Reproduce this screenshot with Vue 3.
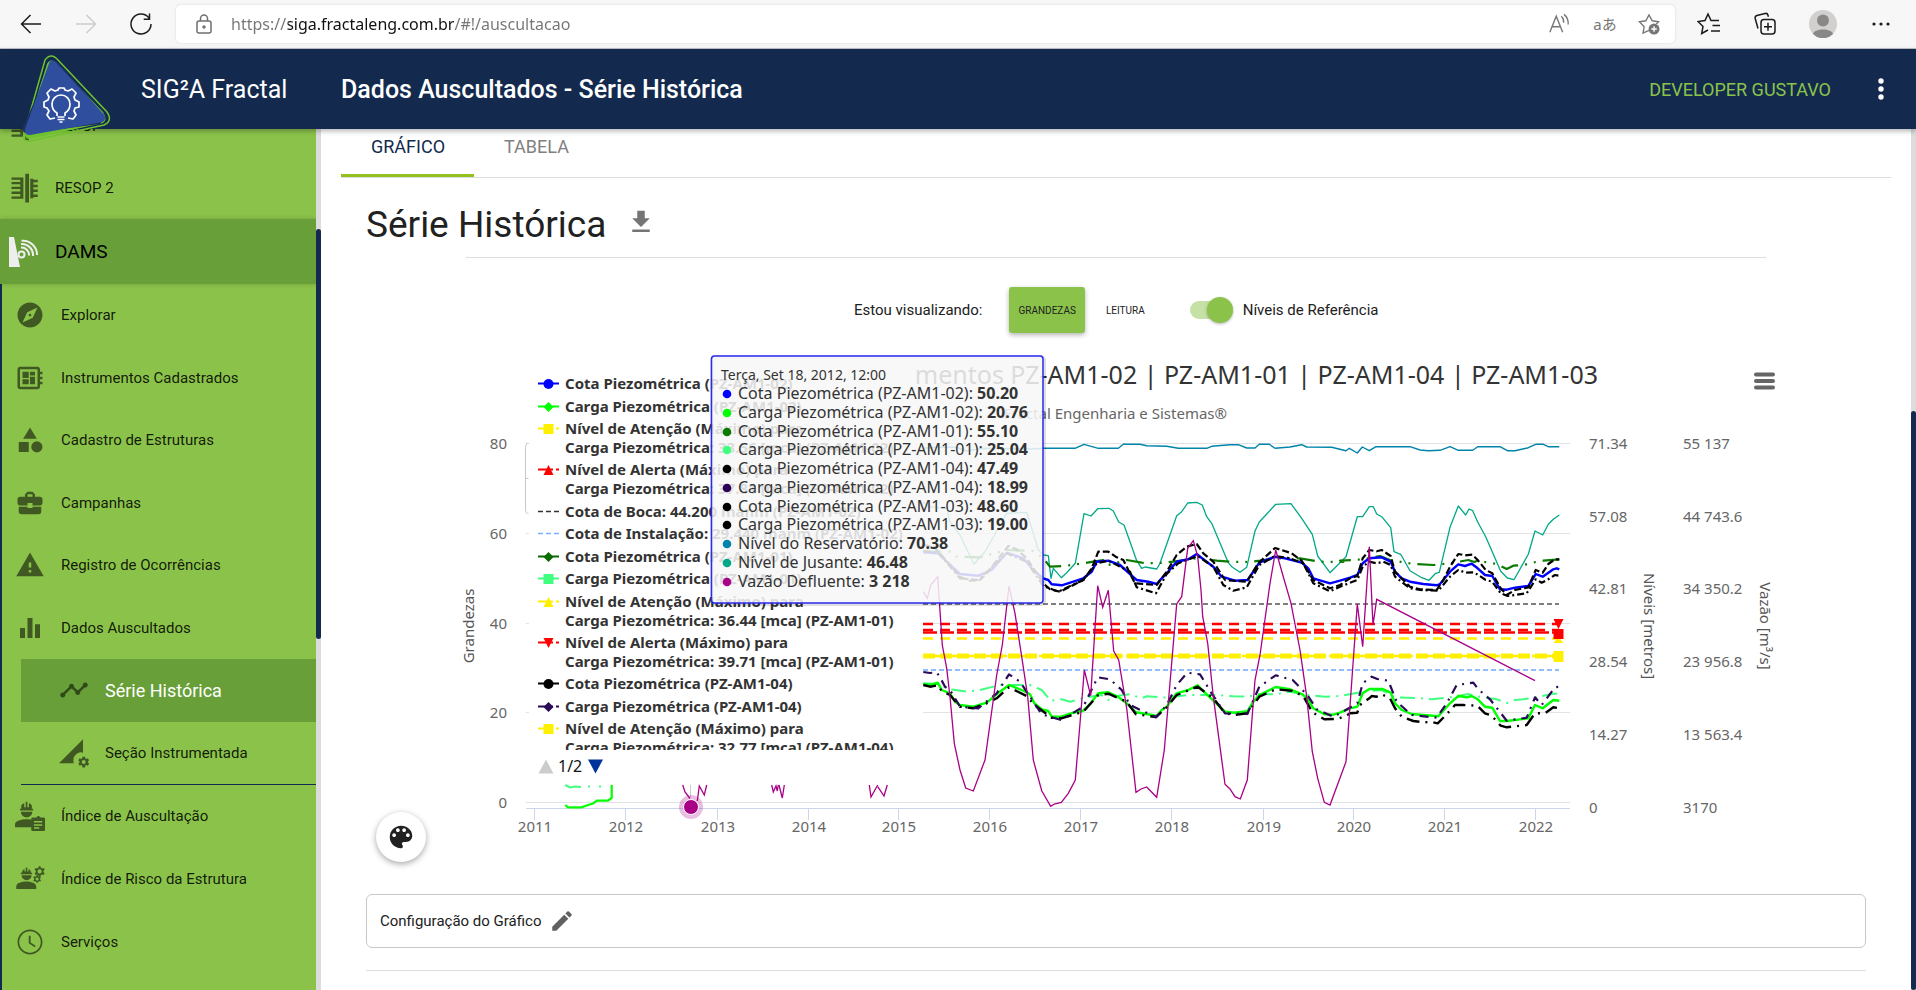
<script setup>
import { ref } from 'vue'

const address = ref('https://siga.fractaleng.com.br/#!/auscultacao')
const showLevels = ref(true)

const icons = {
  explore: 'M12 10.9c-.61 0-1.1.49-1.1 1.1s.49 1.1 1.1 1.1c.61 0 1.1-.49 1.1-1.1s-.49-1.1-1.1-1.1zM12 2C6.48 2 2 6.48 2 12s4.48 10 10 10 10-4.48 10-10S17.52 2 12 2zm2.19 12.19L6 18l3.81-8.19L18 6l-3.81 8.19z',
  board: 'M22 9V7h-2V5c0-1.1-.9-2-2-2H4c-1.1 0-2 .9-2 2v14c0 1.1.9 2 2 2h14c1.1 0 2-.9 2-2v-2h2v-2h-2v-2h2v-2h-2V9h2zm-4 10H4V5h14v14zM6 13h5v4H6zm6-6h4v3h-4zM6 7h5v5H6zm6 4h4v6h-4z',
  category: 'M12 2l-5.5 9h11zM17.5 13a4.5 4.5 0 1 0 0 9 4.5 4.5 0 0 0 0-9zM3 13.5h8v8H3z',
  briefcase: 'M10 16v-1H3.01L3 19c0 1.11.89 2 2 2h14c1.11 0 2-.89 2-2v-4h-7v1h-4zm10-9h-4.01V5l-2-2h-4l-2 2v2H4c-1.1 0-2 .9-2 2v3c0 1.11.89 2 2 2h6v-2h4v2h6c1.1 0 2-.9 2-2V9c0-1.1-.9-2-2-2zm-6 0h-4V5h4v2z',
  warning: 'M1 21h22L12 2 1 21zm12-3h-2v-2h2v2zm0-4h-2v-4h2v4z',
  bars: 'M10 20h4V4h-4v16zm-6 0h4v-8H4v8zM16 9v11h4V9h-4z',
  timeline: 'M23 8c0 1.1-.9 2-2 2-.18 0-.35-.02-.51-.07l-3.56 3.55c.05.16.07.34.07.52 0 1.1-.9 2-2 2s-2-.9-2-2c0-.18.02-.36.07-.52l-2.55-2.55c-.16.05-.34.07-.52.07s-.36-.02-.52-.07l-4.55 4.56c.05.16.07.33.07.51 0 1.1-.9 2-2 2s-2-.9-2-2 .9-2 2-2c.18 0 .35.02.51.07l4.56-4.55C8.02 9.36 8 9.18 8 9c0-1.1.9-2 2-2s2 .9 2 2c0 .18-.02.36-.07.52l2.55 2.55c.16-.05.34-.07.52-.07s.36.02.52.07l3.55-3.56C19.02 8.35 19 8.18 19 8c0-1.1.9-2 2-2s2 .9 2 2z',
  section: 'M20 1v11.2a6.4 6.4 0 0 0-8 6.2c0 .9.1 1.800.3 2.600H0z M24.100 19.500l1-.800-1-1.800-1.300.500a4 4 0 0 0-.900-.500l-.200-1.300h-2.200l-.200 1.300a4 4 0 0 0-.900.500l-1.300-.500-1 1.800 1 .800v1l-1 .800 1 1.800 1.300-.500.900.500.200 1.400h2.200l.200-1.400.900-.500 1.300.500 1-1.800-1-.800zM20.600 21.600a1.600 1.600 0 1 1 0-3.200 1.600 1.600 0 0 1 0 3.200z',
  workerClip: 'M4 6.200h1V3.400A5 5 0 0 1 7.400 1.600V5h1.200V.6h1.300V5h1.200V1.600a5 5 0 0 1 2.400 2v2.600h1v1.300H4zM4.700 8.500h9.200a4.600 4.600 0 0 1-9.200 0zM0 21v-2.500C0 15.700 5 14.500 9.200 14.500c1.300 0 2.600.100 3.800.400V21zM14 13.200h3a1.800 1.800 0 0 1 3.400 0h2.600a1 1 0 0 1 1 1V23a1 1 0 0 1-1 1H14a1 1 0 0 1-1-1v-8.800a1 1 0 0 1 1-1zM15.200 16v1.200h6.600V16zm0 2.500v1.200h6.600v-1.200zm0 2.500v1.200h4.200V21z',
  workerGear: 'M4.600 7h.800A4.600 4.600 0 0 1 7.600 3.700V6h1V2.800h1.200V6h1V3.700A4.600 4.600 0 0 1 13 7h.700v1.200H4.600zM5.300 9h8a4 4 0 0 1-8 0zM1 20v-2.200C1 15.300 5.400 14 9 14s8 1.300 8 3.800V20z M19 1.700l1.400 0 .3 1.200 1.100.6 1.200-.4.700 1.300-.9.900v1.200l.9.900-.7 1.300-1.200-.4-1.100.6-.3 1.200H19l-.3-1.200-1.100-.6-1.200.4-.7-1.300.9-.9V5.300l-.9-.9.700-1.300 1.200.4 1.100-.6zM19.700 4.200a1.700 1.700 0 1 0 0 3.400 1.700 1.700 0 0 0 0-3.400z M17.200 8.800h1l.3.900.9.400.9-.3.500.9-.7.700v1l.7.700-.5.900-.9-.3-.9.400-.3.900h-1l-.3-.9-.9-.4-.9.300-.5-.9.700-.7v-1l-.7-.7.500-.9.900.3.900-.4zM17.700 10.700a1.200 1.200 0 1 0 0 2.400 1.200 1.200 0 0 0 0-2.400z',
  clock: 'M11.99 2C6.47 2 2 6.48 2 12s4.47 10 9.99 10C17.52 22 22 17.52 22 12S17.52 2 11.99 2zM12 20.600a8.600 8.600 0 1 1 0-17.200 8.600 8.600 0 0 1 0 17.200zm.5-13.600H11v6l4.800 3.200.75-1.150-4.050-2.700z',
  dam: 'M2 3.500h9.500v17H2v-1.800h7v-2H2v-1.900h7v-2H2v-1.900h7v-2H2V7.200h7V5.400H2z M13 .500h3v23h-3z M17 4.500h2.500v.9H23v2h-3.500v1.900H23v2h-3.500v1.900H23v2h-3.500v1.900H23v2h-3.500v1H17z',
}

const monitoring = [
  { label: 'Explorar', icon: 'explore' },
  { label: 'Instrumentos Cadastrados', icon: 'board' },
  { label: 'Cadastro de Estruturas', icon: 'category' },
  { label: 'Campanhas', icon: 'briefcase' },
  { label: 'Registro de Ocorrências', icon: 'warning' },
  { label: 'Dados Auscultados', icon: 'bars' },
]
const indexes = [
  { label: 'Índice de Auscultação', icon: 'workerClip' },
  { label: 'Índice de Risco da Estrutura', icon: 'workerGear' },
  { label: 'Serviços', icon: 'clock' },
]

/* Chart geometry: points are thirds of a unit from (900, 350). */
const late = 1320
function line(...parts) {
  return parts
    .flatMap(([dx, dy, text]) => text.split(' ').map((p) => {
      const [x, y] = p.split(',').map(Number)
      return `${(900 + (x + dx) / 3).toFixed(1)},${(350 + (y + dy) / 3).toFixed(1)}`
    }))
    .join(' ')
}

const series = [
  { color: '#0084ab', width: 1.4, points: line([0, 0, '70,295 110,292 170,292 200,303 250,295 395,297 430,295 525,295 552,283 595,295 655,295 670,283 720,283 740,287 800,289 835,295 920,295 935,289 990,284 1015,284 1040,294 1065,294 1078,283 1108,283 1125,295 1170,291 1205,284 1220,291 1295,292 1338,302 1348,295'], [late, 0, '52,309 67,291 88,302 108,290 210,290 240,300 265,302 300,301 330,290 355,301 398,301 413,290 480,290 502,302 525,302 565,293 587,283 610,283 625,290 658,290']) },
  { color: '#00a887', width: 1.3, points: line([0, 0, '70,455 85,470 140,475 150,515 180,555 222,643 255,605 320,490 380,487 400,550 415,600 430,615 445,617 453,685 460,655 484,683 500,668 526,640 552,491 573,498 593,476 627,475 640,483 656,516 672,525 690,575 710,632 725,655 735,651 770,657 780,640 830,497 845,485 863,459 890,457 907,465 920,500 935,520 985,638 995,650 1020,667 1040,652 1065,543 1078,516 1127,463 1173,461 1205,505 1237,553 1253,618 1290,668 1338,620'], [late, 0, '52,500 68,500 88,470 100,470 110,492 125,500 152,533 162,605 182,613 210,662 245,683 267,691 287,670 298,667 330,532 355,468 377,495 387,477 398,482 413,516 437,560 482,664 502,684 522,689 565,613 585,543 608,555 625,523 640,508 658,495']) },
  { color: '#0a7a00', width: 2.2, dash: '18 7 2 7 2 7', points: line([0, 0, '70,605 150,605 170,620 240,622 320,600 400,603 430,625 450,650 500,647 580,635 610,630 625,645 680,630 725,638 770,640 820,635 890,625 950,632 990,635 1045,636 1080,632 1125,625 1200,625 1260,635 1330,636'], [late, 0, '0,632 68,628 120,618 150,630 220,642 280,645 330,640 385,630 403,636 412,632 470,642 500,657 520,647 550,645 587,636 610,632 658,628']) },
  { color: '#0000ff', width: 2.4, points: line([0, 0, '70,607 115,610 140,635 180,672 235,677 275,660 320,608 370,625 400,660 430,685 445,690 455,703 485,706 520,695 550,685 575,665 590,635 625,632 660,645 685,668 710,690 745,695 770,702 785,685 800,670 830,635 865,628 890,612 910,628 940,650 965,680 1005,692 1043,690 1060,665 1078,638 1125,620 1155,625 1205,638 1225,655 1240,685 1290,700'], [late, 0, '0,692 30,683 52,675 68,640 88,625 125,622 152,635 165,665 185,685 210,695 250,702 290,706 300,702 330,665 355,643 375,648 395,641 413,655 435,675 457,678 480,718 500,719 525,713 565,708 587,672 608,680 640,658 650,655 658,658']) },
  { color: '#000', width: 2.2, dash: '7 3', points: line([0, 0, '70,585 100,590 120,610 180,680 210,692 240,690 260,670 325,588 350,598 380,625 430,700 450,718 480,725 550,690 575,655 595,605 625,605 650,622 670,630 705,700 770,705 800,665 830,615 860,590 890,582 910,610 940,635 975,690 1040,695 1075,640 1125,594 1175,610 1205,632 1240,690 1290,715'], [late, 0, '0,705 30,685 52,678 68,625 88,600 110,604 125,600 152,618 165,665 210,710 240,718 290,720 310,690 330,650 355,612 375,616 397,614 413,630 437,660 457,670 482,715 500,735 525,720 565,712 587,660 608,668 625,642 645,628 658,628']) },
  { color: '#000', width: 2.2, dash: '7 3 2 3', points: line([0, 0, '70,603 115,608 180,685 235,690 320,610 380,635 430,708 475,725 550,690 590,640 625,632 690,665 710,712 768,730 800,672 835,640 893,618 940,650 970,705 1000,722 1040,712 1078,645 1125,618 1170,625 1210,640 1240,700 1290,724'], [late, 0, '0,710 52,690 68,650 88,635 110,640 130,635 152,645 165,680 210,715 240,720 295,722 330,680 355,660 377,668 400,667 415,675 437,690 457,695 482,730 503,738 560,730 587,688 605,698 625,688 645,675 658,677']) },
  { color: '#40ff80', width: 2, dash: '15 6 2 6', points: line([0, 690, '70,310 110,312 150,328 200,335 240,330 300,315 390,315 425,330 452,362 485,358 510,365 560,352 605,345 625,360 655,347 690,343 725,355 740,349 800,353 865,345 950,345 1000,349 1045,350 1080,342 1125,343 1170,335 1220,345 1275,350'], [late, 720, '0,318 68,305 125,300 165,322 245,325 275,328 330,322 385,312 405,318 470,328 500,339 525,330 550,328 590,322 640,311 658,311']) },
  { color: '#00ff00', width: 2.4, points: line([0, 690, '70,312 90,315 113,308 125,330 150,340 165,365 180,375 220,380 260,368 300,335 327,315 345,322 365,330 390,343 403,370 425,388 445,393 455,410 484,410 520,398 550,392 572,370 595,340 625,337 650,348 680,370 708,397 740,402 770,408 785,390 800,380 830,340 865,330 893,316 910,333 940,362 975,395 1005,398 1042,394 1060,365 1078,345 1127,321 1170,328 1205,342 1222,355 1240,385 1273,403 1300,404'], [late, 720, '0,368 30,355 52,350 68,310 88,297 128,297 152,308 165,340 185,360 215,372 295,379 330,340 355,318 380,322 395,318 413,328 435,350 457,353 480,393 500,393 565,385 585,345 608,355 640,330 658,332']) },
  { color: '#000', width: 2.4, dash: '13 6 2 6', points: line([0, 690, '70,315 90,320 113,316 125,333 150,345 180,380 220,385 260,370 290,355 327,322 380,348 403,375 455,413 484,415 550,395 595,345 625,341 680,365 708,403 768,411 800,382 830,345 893,320 940,355 975,400 1005,405 1042,400 1078,350 1127,328 1175,332 1210,348 1237,397 1273,418 1310,417'], [late, 720, '18,378 30,370 52,368 60,345 88,325 95,318 110,320 125,313 150,325 165,355 185,380 220,393 250,397 275,396 293,400 318,375 345,345 370,345 412,347 435,370 455,377 482,407 500,412 560,405 585,370 615,370 640,352 658,355']) },
  { color: '#2b0a57', width: 2.2, dash: '9 6 2 6', points: line([0, 690, '70,276 90,279 110,277 120,292 135,320 150,330 180,380 235,385 290,340 327,283 360,305 390,350 425,403 484,420 550,380 593,292 630,298 665,330 690,375 768,412 800,375 830,315 862,278 900,283 935,340 975,400 1042,402 1078,320 1127,286 1178,300 1222,345 1250,388 1300,410'], [late, 720, '0,370 52,340 68,280 95,260 112,267 145,272 170,335 215,375 290,383 320,340 350,285 400,278 415,298 450,328 500,392 560,383 585,322 605,345 645,292 658,290']) },
]
const outflow = line([0, 690, '70,35 82,55 92,15 105,0 113,-10 127,195 140,265 150,350 163,490 180,570 197,624 220,633 255,540 290,285 307,195 327,18 345,100 365,230 383,350 400,540 425,632 452,679 463,672 484,667 505,640 526,600 540,430 553,270 572,347 593,17 608,82 625,31 641,213 656,240 680,385 708,637 723,627 740,621 770,652 793,510 830,72 845,50 863,-95 880,-118 893,-70 903,30 908,110 923,190 940,350 975,613 990,627 1005,650 1021,657 1042,600 1065,300 1080,225 1110,10 1127,-90 1150,-10 1173,70 1200,210 1220,350 1237,515 1253,595 1273,667 1290,675'], [late, 720, '18,515 52,42 68,170 88,-130 99,105 110,28 585,272'])

const levels = [
  { y: 604, color: '#555', width: 1.6, dash: '5 3' },
  { y: 624, color: '#ff0000', width: 2.4, dash: '10 7' },
  { y: 630, color: '#ff0000', width: 2.4, dash: '10 7' },
  { y: 632.5, color: '#ff0000', width: 2.5, dash: '14 3' },
  { y: 638.5, color: '#fff000', width: 2.4, dash: '10 7' },
  { y: 656, color: '#fff000', width: 5, dash: '12 5' },
  { y: 656, color: '#fff000', width: 2.4, dash: '26 3' },
  { y: 670, color: '#6fa8ff', width: 1.6, dash: '5 3' },
]

const grid = [{ v: 80, y: 443 }, { v: 60, y: 533 }, { v: 40, y: 623 }, { v: 20, y: 712 }, { v: 0, y: 802 }]
const years = [534, 625, 717, 808, 898, 989, 1080, 1171, 1263, 1353, 1444, 1535].map((x, i) => ({ x, label: 2011 + i }))
const rightAxis = [
  ['71.34', '55 137', 449], ['57.08', '44 743.6', 522], ['42.81', '34 350.2', 594],
  ['28.54', '23 956.8', 667], ['14.27', '13 563.4', 740], ['0', '3170', 813],
].map(([a, b, y]) => ({ a, b, y }))

const legend = [
  { y: 389, t: 'Cota Piezométrica (PZ-AM1-02)', c: '#0000ff', m: 'circle' },
  { y: 412, t: 'Carga Piezométrica (PZ-AM1-02)', c: '#00ff00', m: 'diamond' },
  { y: 434, t: 'Nível de Atenção (Máximo) para', t2: 'Carga Piezométrica: 33.56 [mca] (PZ-AM1-02)', c: '#fff000', m: 'square', dash: '15 3 3' },
  { y: 475, t: 'Nível de Alerta (Máximo) para', t2: 'Carga Piezométrica: 37.81 [mca] (PZ-AM1-02)', c: '#ff0000', m: 'up', dash: '15 3 3' },
  { y: 517, t: 'Cota de Boca: 44.200 manm (PZ-AM1-02)', c: '#333', dash: '5 3', thin: true },
  { y: 539, t: 'Cota de Instalação: 29.440 manm (PZ-AM1-02)', c: '#7cb0ff', dash: '5 3', thin: true },
  { y: 562, t: 'Cota Piezométrica (PZ-AM1-01)', c: '#0a6a00', m: 'diamond' },
  { y: 584, t: 'Carga Piezométrica (PZ-AM1-01)', c: '#40ff80', m: 'square' },
  { y: 607, t: 'Nível de Atenção (Máximo) para', t2: 'Carga Piezométrica: 36.44 [mca] (PZ-AM1-01)', c: '#fff000', m: 'up', dash: '15 3 3' },
  { y: 648, t: 'Nível de Alerta (Máximo) para', t2: 'Carga Piezométrica: 39.71 [mca] (PZ-AM1-01)', c: '#ff0000', m: 'down', dash: '15 3 3' },
  { y: 689, t: 'Cota Piezométrica (PZ-AM1-04)', c: '#000', m: 'circle' },
  { y: 712, t: 'Carga Piezométrica (PZ-AM1-04)', c: '#2b0a57', m: 'diamond', dash: '15 3 3' },
  { y: 734, t: 'Nível de Atenção (Máximo) para', t2: 'Carga Piezométrica: 32.77 [mca] (PZ-AM1-04)', c: '#fff000', m: 'square', dash: '15 3 3' },
]
const markers = {
  circle: 'M-5 0a5 5 0 1 0 10 0a5 5 0 1 0 -10 0z',
  diamond: 'M0 -5L5 0L0 5L-5 0z',
  square: 'M-5 -5h10v10h-10z',
  up: 'M0 -5L5 5H-5z',
  down: 'M0 5L5 -5H-5z',
}

const tip = [
  ['Cota Piezométrica (PZ-AM1-02):', '50.20', '#0000ff'],
  ['Carga Piezométrica (PZ-AM1-02):', '20.76', '#00ff00'],
  ['Cota Piezométrica (PZ-AM1-01):', '55.10', '#0a7a00'],
  ['Carga Piezométrica (PZ-AM1-01):', '25.04', '#40ff80'],
  ['Cota Piezométrica (PZ-AM1-04):', '47.49', '#000'],
  ['Carga Piezométrica (PZ-AM1-04):', '18.99', '#2b0057'],
  ['Cota Piezométrica (PZ-AM1-03):', '48.60', '#000'],
  ['Carga Piezométrica (PZ-AM1-03):', '19.00', '#000'],
  ['Nível do Reservatório:', '70.38', '#0084ab'],
  ['Nível de Jusante:', '46.48', '#00a887'],
  ['Vazão Defluente:', '3 218', '#a80087'],
].map(([label, value, color], i) => ({ label, value, color, y: Math.round(399 + i * 18.75) }))

const fragments = [
  '682.7,785 685,792 690,798.500', '697.300,801 699.300,786 704.300,795 706.700,785',
  '771.700,785 773.300,792 776,786 777.300,791 778.300,785', '779,785 782.300,798 784.300,785',
  '869.300,785 871,797 877.700,785', '877.700,786.600 884,796 887.300,785',
]
</script>

<template>
  <div class="page">
    <div class="browser">
      <button class="tool" aria-label="Voltar"><svg viewBox="0 0 24 24"><path d="M22 12H2.500M11.500 3L2.500 12l9 9" /></svg></button>
      <button class="tool muted" aria-label="Avançar"><svg viewBox="0 0 24 24"><path d="M2 12h19.500M12.500 3l9 9-9 9" /></svg></button>
      <button class="tool" aria-label="Atualizar"><svg viewBox="0 0 24 24"><path d="M20 6A10 10 0 1 0 22 12M20.500 1.500v5.700h-5.800" /></svg></button>
      <div class="address">
        <svg class="lock" viewBox="0 0 16 20"><rect x="1" y="7" width="14" height="12" rx="2" /><path d="M4.500 7V4.500a3.500 3.500 0 0 1 7 0V7" /><circle cx="8" cy="13" r="1" /></svg>
        <input v-model="address" aria-label="Endereço" type="text" spellcheck="false">
        <button class="inner" aria-label="Ler em voz alta"><svg viewBox="0 0 24 24"><path d="M2 21L9 3.500 16 21M4.400 15h9.200M14.500 3.500q3 2.500 2.500 7M17.500 1.500q5 4 4.500 11" /></svg></button>
        <button class="inner word" aria-label="Traduzir">aあ</button>
        <button class="inner" aria-label="Adicionar aos favoritos"><svg viewBox="0 0 24 24"><path d="M12 19l-6.500 3 1.200-7L1.500 9.500l7-1L12 2l3.500 6.500 7 1-2.500 2.500" /><circle class="solid" cx="17.500" cy="17.500" r="6" /><path class="plus" d="M17.500 14.500v6M14.500 17.500h6" /></svg></button>
      </div>
      <div class="browser-actions">
        <button class="inner dark" aria-label="Favoritos"><svg viewBox="0 0 24 24"><path d="M11 18l-6.300 3.500 1.300-7L1 9.500l7-1L11 2l3 6.500h8M15.500 13.500H23M14 19h9" /></svg></button>
        <button class="inner dark" aria-label="Coleções"><svg viewBox="0 0 24 24"><path d="M5 16.500L2.200 6.500a2.500 2.500 0 0 1 1.800-3l8-2a2.500 2.500 0 0 1 3 1.700l.4 1.600" /><rect x="8" y="7.500" width="14" height="14.500" rx="3" /><path d="M15 10.800v8M11 14.800h8" /></svg></button>
        <button class="avatar" aria-label="Perfil"><svg viewBox="0 0 28 28"><circle cx="14" cy="14" r="14" fill="#d2d0ce" /><circle cx="14" cy="10.500" r="6" fill="#8a8886" /><path d="M4 24c1-6 19-6 20 0a14 14 0 0 1-20 0z" fill="#8a8886" /></svg></button>
        <button class="inner dark" aria-label="Mais"><svg viewBox="0 0 24 24"><g class="ink"><circle cx="5" cy="12" r="1.600" /><circle cx="12" cy="12" r="1.600" /><circle cx="19" cy="12" r="1.600" /></g></svg></button>
      </div>
    </div>

    <header class="topbar">
      <svg class="logo" viewBox="20 54 92 90">
        <path d="M45 60q6-8 13 0L107 112q6 9-3 13L30 141q-8 1-6-7z" fill="none" stroke="#6fc22f" stroke-width="1.500" />
        <path d="M47 64q3-6 8-2l48 50q5 8 0 11L30 139q-5 0-5-5z" fill="#6fc22f" />
        <path d="M51 64q4-6 9 0l41 48q5 7-1 12l-70 9q-8 2-7-6z" fill="#1c3160" />
        <path d="M49.500 62q3-4 7 1l48 52q2 5-2 7L30 135q-6 0-5-6z" fill="#2f4f9e" />
        <g fill="none" stroke="#fff" stroke-width="1.700" stroke-linejoin="round">
          <path d="M55 118l-5 1-3-4 2-4-2-3-3-1v-5l4-2 1-3-2-4 4-4 4 2 3-1 1-2h5l1 2 3 1 4-2 4 4-2 4 1 3 4 2v5l-4 1-1 3 2 4-3 4-5-1" />
          <path d="M57 116v-3q-5-3-5-9a9 9 0 0 1 18 0q0 6-5 9v3" />
          <path d="M57.500 117h7M57.500 119.500h7M59.500 122h3" />
        </g>
      </svg>
      <span class="brand">SIG²A Fractal</span>
      <h1>Dados Auscultados - Série Histórica</h1>
      <button class="user">DEVELOPER GUSTAVO</button>
      <button class="more" aria-label="Menu do usuário"><svg viewBox="0 0 6 22"><circle cx="3" cy="3" r="2.700" /><circle cx="3" cy="11" r="2.700" /><circle cx="3" cy="19" r="2.700" /></svg></button>
    </header>

    <div class="body">
      <nav class="sidebar">
        <div class="menu">
          <a class="item cut" href="#resop"><svg viewBox="0 0 24 24"><path :d="icons.dam" /></svg>RESOP</a>
          <a class="item plant" href="#resop2"><svg viewBox="0 0 24 24"><path :d="icons.dam" /></svg>RESOP 2</a>
          <a class="item dams" href="#dams">
            <svg viewBox="0 0 30 30"><path class="fill" d="M0 0h5l6 30H0z" /><circle cx="12.500" cy="17.500" r="3" /><path d="M12 10.500a7.500 7.500 0 0 1 8 8M12 7a11 11 0 0 1 12 12M12.500 3.800A14 14 0 0 1 28 18" /></svg>DAMS
          </a>
          <div class="tree">
            <div class="group six">
              <a v-for="m in monitoring" :key="m.label" class="item" href="#"><svg viewBox="0 0 24 24"><path :d="icons[m.icon]" fill-rule="evenodd" /></svg>{{ m.label }}</a>
            </div>
            <div class="group sub">
              <a class="item active" href="#"><svg viewBox="0 0 24 24"><path :d="icons.timeline" /></svg>Série Histórica</a>
              <a class="item" href="#"><svg viewBox="0 0 25 25"><path :d="icons.section" fill-rule="evenodd" /></svg>Seção Instrumentada</a>
            </div>
            <div class="group three">
              <a v-for="m in indexes" :key="m.label" class="item" href="#"><svg viewBox="0 0 24 24"><path :d="icons[m.icon]" fill-rule="evenodd" /></svg>{{ m.label }}</a>
            </div>
          </div>
        </div>
        <div class="rail side-rail"><div class="thumb" /></div>
      </nav>

      <main class="content">
        <div class="tabs" role="tablist">
          <button role="tab" aria-selected="true" class="tab on">GRÁFICO</button>
          <button role="tab" aria-selected="false" class="tab">TABELA</button>
        </div>

        <div class="heading">
          <h2>Série Histórica</h2>
          <button aria-label="Baixar"><svg viewBox="0 0 24 24"><path d="M19 9h-4V3H9v6H5l7 7 7-7zM5 18v2h14v-2H5z" /></svg></button>
        </div>

        <div class="controls">
          <span class="viewing">Estou visualizando:</span>
          <button class="choice picked">GRANDEZAS</button>
          <button class="choice">LEITURA</button>
          <label class="switch"><input v-model="showLevels" type="checkbox" role="switch">Níveis de Referência</label>
        </div>

        <div class="chart">
          <svg viewBox="366 345 1500 515" role="img" aria-label="Série histórica dos instrumentos">
            <text class="title" x="1598" y="384" text-anchor="end">mentos PZ-AM1-02 | PZ-AM1-01 | PZ-AM1-04 | PZ-AM1-03</text>
            <text class="subtitle" x="1227" y="419" text-anchor="end">Fractal Engenharia e Sistemas®</text>
            <path class="burger" d="M1756 374.500h17M1756 381h17M1756 387.500h17" />

            <g v-for="g in grid" :key="g.v">
              <path class="grid" :d="`M526 ${g.y}.500H1570`" />
              <text class="tick" x="507" :y="g.y + 6" text-anchor="end">{{ g.v }}</text>
            </g>
            <path class="axis" d="M526 808.500H1570" />
            <g v-for="t in years" :key="t.label">
              <path class="axis" :d="`M${t.x}.500 808V820`" />
              <text class="tick" :x="t.x + 1" y="832" text-anchor="middle">{{ t.label }}</text>
            </g>
            <g v-for="r in rightAxis" :key="r.y">
              <text class="tick" x="1589" :y="r.y">{{ r.a }}</text>
              <text class="tick" x="1683" :y="r.y">{{ r.b }}</text>
            </g>
            <text class="axis-title" transform="translate(474 626) rotate(-90)" text-anchor="middle">Grandezas</text>
            <text class="axis-title" transform="translate(1644 626) rotate(90)" text-anchor="middle">Níveis [metros]</text>
            <text class="axis-title" transform="translate(1760 626) rotate(90)" text-anchor="middle">Vazão [m³/s]</text>

            <g v-if="showLevels">
              <path v-for="(l, i) in levels" :key="i" :d="`M923 ${l.y}H1559`" :stroke="l.color" :stroke-width="l.width" :stroke-dasharray="l.dash" />
            </g>
            <polyline v-for="(s, i) in series" :key="i" :points="s.points" fill="none" :stroke="s.color" :stroke-width="s.width" :stroke-dasharray="s.dash" stroke-linejoin="round" />
            <path d="M1558.500 637L1563.500 643h-10zM1553.500 651h10v11h-10z" fill="#fff000" />
            <path d="M1558.500 629L1553.500 619h10zM1553.500 629h10v10h-10z" fill="#ff0000" />
            <polyline :points="outflow" fill="none" stroke="#a80087" stroke-width="1.300" />

            <rect x="529" y="390" width="394" height="395" fill="#fff" />
            <path class="bracket" d="M528.500 443.500h-1q-2 0-2 4v62q0 4 2 4h1M525.500 478.500h3" />

            <polyline points="565.300,785 570,787.500 575,786.500 581,787" fill="none" stroke="#40ff80" stroke-width="2" />
            <path d="M588 786.500h2M599 786.500h2" stroke="#40ff80" stroke-width="2" />
            <polyline points="565.300,805 568,807.300 581.700,807.300 588,805 593,803.500 597,800.700 608,800.700 611.700,798 611.700,785" fill="none" stroke="#00ff00" stroke-width="2.200" />
            <path d="M690.500 785V797" stroke="#ccc" />
            <polyline v-for="f in fragments" :key="f" :points="f" fill="none" stroke="#a80087" stroke-width="1.300" />
            <circle cx="691" cy="807" r="12" fill="#a80087" fill-opacity=".25" />
            <circle cx="691" cy="807" r="7.500" fill="#a80087" stroke="#fff" />

            <clipPath id="legend-page"><rect x="530" y="365" width="393" height="385" /></clipPath>
            <g clip-path="url(#legend-page)">
              <g v-for="l in legend" :key="l.y">
                <path :d="`M538 ${l.y - 5.5}H559`" :stroke="l.c" :stroke-width="l.thin ? 1.5 : 2" :stroke-dasharray="l.dash" />
                <path v-if="l.m" :d="markers[l.m]" :fill="l.c" :transform="`translate(548.5 ${l.y - 5})`" />
                <text class="entry" x="565" :y="l.y">{{ l.t }}</text>
                <text v-if="l.t2" class="entry" x="565" :y="l.y + 19">{{ l.t2 }}</text>
              </g>
            </g>
            <path d="M538.500 773.500h15l-7.500-14z" fill="#ccc" />
            <path d="M588 759.500h15l-7.500 14z" fill="#003399" />
            <text class="pager" x="558" y="772">1/2</text>

            <rect class="tip-shadow" x="712" y="357" width="332" height="247" rx="3" />
            <rect class="tip" x="711.500" y="356" width="331.500" height="247" rx="3" />
            <text class="tip-date" x="721" y="380">Terça, Set 18, 2012, 12:00</text>
            <g v-for="t in tip" :key="t.label">
              <circle cx="727" :cy="t.y - 5" r="4.300" :fill="t.color" />
              <text class="tip-row" x="738" :y="t.y">{{ t.label }} <tspan class="strong">{{ t.value }}</tspan></text>
            </g>
          </svg>
          <button class="palette" aria-label="Cores"><svg viewBox="0 0 24 24"><path d="M12 3c-4.970 0-9 4.030-9 9s4.030 9 9 9c.830 0 1.500-.670 1.500-1.500 0-.390-.150-.740-.390-1.010-.230-.260-.380-.610-.380-.990 0-.830.670-1.500 1.500-1.500H16c2.760 0 5-2.240 5-5 0-4.420-4.030-8-9-8zm-5.500 9c-.830 0-1.500-.670-1.500-1.500S5.670 9 6.500 9 8 9.670 8 10.500 7.330 12 6.500 12zm3-4C8.670 8 8 7.330 8 6.500S8.670 5 9.500 5s1.500.670 1.500 1.500S10.330 8 9.500 8zm5 0c-.830 0-1.500-.670-1.500-1.500S13.670 5 14.500 5s1.500.670 1.500 1.500S15.330 8 14.500 8zm3 4c-.830 0-1.500-.670-1.500-1.500S16.670 9 17.500 9s1.500.670 1.500 1.500-.670 1.500-1.500 1.500z" /></svg></button>
        </div>

        <button class="config">
          Configuração do Gráfico
          <svg viewBox="0 0 24 24"><path d="M3 17.250V21h3.750L17.810 9.940l-3.750-3.750L3 17.250zM20.710 7.040c.390-.390.390-1.020 0-1.410l-2.340-2.340c-.390-.390-1.020-.390-1.410 0l-1.830 1.830 3.750 3.750 1.830-1.830z" /></svg>
        </button>
        <hr>
      </main>
      <div class="rail main-rail"><div class="thumb" /></div>
    </div>
  </div>
</template>

<style>
body {
  overflow: hidden;
}
</style>

<style scoped>
.page {
  display: flex;
  flex-direction: column;
  height: 100vh;
  background: #fff;
  color: #212121;
  font-family: Roboto, "Liberation Sans", sans-serif;
  font-size: 15px;
}
.page * {
  box-sizing: border-box;
}
button {
  padding: 0;
  border: 0;
  background: none;
  color: inherit;
  font: inherit;
  cursor: pointer;
}
svg {
  display: block;
}

/* Browser bar */
.browser {
  display: flex;
  flex: none;
  align-items: center;
  height: 49px;
  padding: 0 23px 0 19px;
  border-bottom: 1px solid #c3c5c8;
  background: #f7f7f7;
}
.tool {
  width: 24px;
  margin-right: 31px;
}
.tool:nth-of-type(3) {
  margin-right: 23px;
}
.tool svg,
.inner svg {
  width: 24px;
  height: 24px;
  fill: none;
  stroke: #1b1b1b;
  stroke-width: 1.500;
}
.muted svg {
  stroke: #ccc;
}
.address {
  display: flex;
  flex: 1;
  align-items: center;
  height: 38px;
  padding: 0 13px 0 20px;
  border-radius: 5px;
  background: #fff;
  box-shadow: 0 0 3px rgba(0, 0, 0, .12);
}
.lock {
  width: 16px;
  height: 20px;
  fill: none;
  stroke: #707070;
  stroke-width: 1.500;
}
.address input {
  flex: 1;
  min-width: 0;
  margin-left: 19px;
  padding: 0;
  border: 0;
  outline: 0;
  background: linear-gradient(90deg, #757575 57px, #111 57px, #111 223px, #757575 223px);
  background-clip: text;
  color: transparent;
  font: 16px/24px "Noto Sans", sans-serif;
}
.inner {
  width: 24px;
}
.address .inner {
  margin-left: 21px;
}
.address .inner svg {
  width: 22px;
  height: 22px;
  stroke: #767676;
}
.address .word {
  color: #767676;
  font: 15px/22px "Noto Sans", "Noto Sans CJK JP", sans-serif;
}
.solid {
  fill: #767676;
  stroke: none;
}
.plus {
  stroke: #fff;
}
.browser-actions {
  display: flex;
  align-items: center;
  gap: 32px;
  margin-left: 22px;
}
.avatar {
  width: 28px;
}
.ink {
  fill: #1b1b1b;
  stroke: none;
}

/* Top bar */
.topbar {
  position: relative;
  z-index: 2;
  display: flex;
  flex: none;
  align-items: center;
  height: 80px;
  padding: 0 32px 0 20px;
  background: #132a4e;
  box-shadow: 0 2px 5px rgba(0, 0, 0, .3);
  color: #fff;
  font-size: 25px;
}
.logo {
  align-self: flex-start;
  flex: none;
  width: 92px;
  height: 90px;
  margin-top: 5px;
}
.brand {
  width: 200px;
  margin-left: 29px;
}
h1 {
  flex: 1;
  margin: 0;
  font-size: 25px;
  font-weight: 500;
}
.user {
  color: #8bc34a;
  font-size: 18px;
}
.more {
  margin-left: 47px;
}
.more svg {
  width: 6px;
  height: 22px;
  fill: #fff;
}

/* Sidebar */
.body {
  display: flex;
  flex: 1;
  min-height: 0;
}
.sidebar {
  display: flex;
  flex: none;
  width: 321px;
  overflow: hidden;
}
.menu {
  flex: 1;
  background: #8bc34a;
}
.item {
  display: flex;
  align-items: center;
  color: rgba(0, 0, 0, .87);
  text-decoration: none;
}
.item svg {
  flex: none;
  width: 30px;
  height: 30px;
  fill: rgba(0, 0, 0, .54);
}
.cut,
.plant {
  gap: 16px;
  height: 62px;
  padding-left: 9px;
}
.cut {
  margin-top: -34px;
}
.dams {
  gap: 16px;
  height: 65px;
  padding-left: 9px;
  background: #689f38;
  color: #000;
  font-size: 19px;
  box-shadow: 0 0 5px rgba(0, 0, 0, .2);
}
.dams svg {
  fill: none;
  stroke: #eee;
  stroke-width: 2;
}
.dams .fill {
  fill: #eee;
  stroke: none;
}
.tree {
  height: 100%;
  border-left: 2px solid #132a4e;
}
.group {
  display: grid;
  grid-auto-rows: 1fr;
}
.group .item {
  gap: 16px;
  padding-left: 13px;
}
.six {
  height: 375px;
}
.sub {
  height: 126px;
  margin-left: 19px;
  border-bottom: 1px solid #132a4e;
}
.group.sub .item {
  padding-left: 38px;
}
.three {
  height: 188px;
}
.sub .active {
  background: #689f38;
  color: #fff;
  font-size: 18px;
}
.rail {
  flex: none;
  width: 5px;
  background: #dcdcdc;
}
.thumb {
  border-radius: 3px;
  background: #132a4e;
}
.side-rail {
  padding-top: 100px;
}
.side-rail .thumb {
  height: 410px;
}
.main-rail {
  display: flex;
  padding-top: 282px;
}
.main-rail .thumb {
  flex: 1;
}

/* Content */
.content {
  flex: 1;
  min-width: 0;
  padding: 0 20px;
  overflow: hidden;
}
.tabs {
  display: flex;
  border-bottom: 1px solid #ddd;
}
.tab {
  height: 48px;
  padding: 0 29px 11px 30px;
  border-bottom: 3px solid transparent;
  color: #808080;
  font-size: 18px;
}
.tab.on {
  border-color: #94c11f;
  color: #132a4e;
}
.heading {
  display: flex;
  align-items: center;
  gap: 20px;
  height: 79px;
  padding: 14px 25px 0;
}
h2 {
  margin: 0;
  font-size: 37px;
  font-weight: 400;
}
.heading button {
  margin-bottom: 6px;
}
.heading svg {
  width: 30px;
  height: 30px;
  fill: #757575;
}
.controls {
  display: flex;
  align-items: center;
  margin: 0 125px;
  padding: 29px 0 12px 388px;
  border-top: 1px solid #ddd;
}
.viewing {
  margin-right: 27px;
}
.choice {
  height: 46px;
  padding: 0 9px;
  border-radius: 3px;
  font-size: 10px;
}
.picked {
  margin-right: 12px;
  background: #8bc34a;
  box-shadow: 0 2px 5px rgba(0, 0, 0, .3);
}
.switch {
  display: flex;
  align-items: center;
  gap: 10px;
  margin-left: 36px;
}
.switch input {
  position: relative;
  width: 43px;
  height: 18px;
  margin: 0;
  border-radius: 9px;
  background: #c5e1a5;
  appearance: none;
}
.switch input::after {
  position: absolute;
  top: -4px;
  right: 0;
  width: 26px;
  height: 26px;
  border-radius: 50%;
  background: #8bc34a;
  box-shadow: 0 1px 3px rgba(0, 0, 0, .3);
  content: "";
}

/* Chart */
.chart {
  position: relative;
  margin: 0 25px;
}
.chart > svg {
  width: 100%;
  font-family: "Noto Sans", sans-serif;
  font-size: 15px;
}
.title {
  fill: #333;
  font-size: 25px;
}
.subtitle {
  fill: #666;
  font-size: 15px;
}
.burger {
  stroke: #666;
  stroke-width: 4;
  stroke-linecap: round;
}
.grid {
  stroke: #e3e3e3;
}
.axis {
  stroke: #ccd6eb;
}
.tick {
  fill: #666;
}
.axis-title {
  fill: #555;
}
.bracket {
  fill: none;
  stroke: #c8c8c8;
}
.entry {
  fill: #333;
  font-weight: 700;
}
.pager {
  fill: #111;
  font-size: 16px;
}
.tip {
  fill: rgba(247, 247, 247, .86);
  stroke: #2a2af0;
  stroke-width: 1.500;
}
.tip-shadow {
  fill: none;
  stroke: rgba(0, 0, 0, .12);
  stroke-width: 4;
}
.tip-date {
  fill: #333;
  font-size: 14px;
}
.tip-row {
  fill: #333;
  font-size: 16px;
}
.strong {
  font-weight: 700;
}
.palette {
  position: absolute;
  bottom: -2px;
  left: 10px;
  display: grid;
  width: 50px;
  height: 50px;
  place-items: center;
  border-radius: 50%;
  background: #fff;
  box-shadow: 0 2px 6px rgba(0, 0, 0, .35);
}
.palette svg {
  width: 30px;
  height: 30px;
  fill: #212121;
}
.config {
  display: flex;
  align-items: center;
  gap: 8px;
  width: calc(100% - 50px);
  height: 54px;
  margin: 34px 25px 22px;
  padding: 0 13px;
  border: 1px solid #c8c8c8;
  border-radius: 6px;
}
.config svg {
  width: 26px;
  height: 26px;
  fill: #616161;
}
hr {
  margin: 0 25px;
  border: 0;
  border-top: 1px solid #ddd;
}
</style>
